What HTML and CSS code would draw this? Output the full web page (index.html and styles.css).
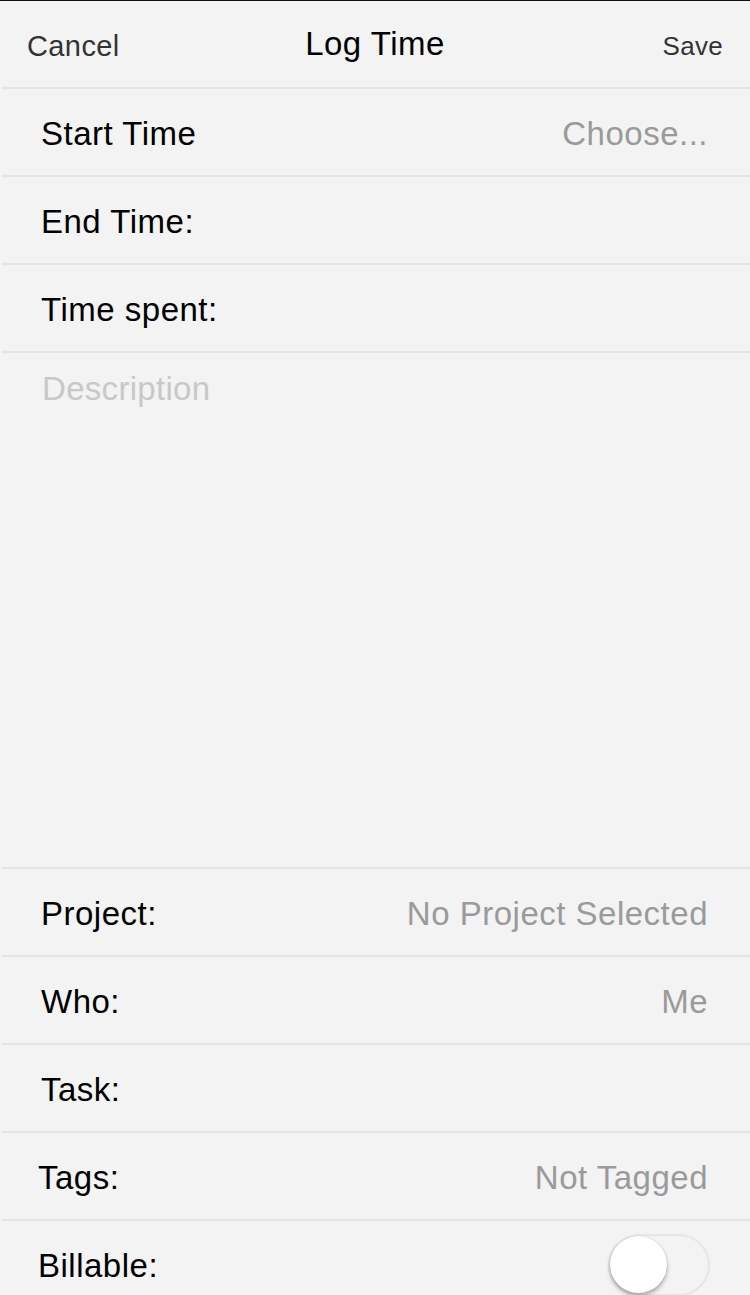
FILE: index.html
```html
<!DOCTYPE html>
<html>
<head>
  <title>Log Time</title>
  <link rel="stylesheet" href="styles.css">
</head>
<body>
  <div class="screen">
    <div class="navbar">
      <span class="nav-btn cancel">Cancel</span>
      <span class="nav-title">Log Time</span>
      <span class="nav-btn save">Save</span>
    </div>

    <div class="row">
      <span class="label">Start Time</span>
      <span class="value">Choose...</span>
    </div>
    <div class="row">
      <span class="label">End Time:</span>
    </div>
    <div class="row">
      <span class="label">Time spent:</span>
    </div>

    <div class="description">Description</div>

    <div class="row">
      <span class="label">Project:</span>
      <span class="value">No Project Selected</span>
    </div>
    <div class="row">
      <span class="label">Who:</span>
      <span class="value">Me</span>
    </div>
    <div class="row">
      <span class="label">Task:</span>
    </div>
    <div class="row">
      <span class="label shift">Tags:</span>
      <span class="value">Not Tagged</span>
    </div>
    <div class="row last">
      <span class="label shift">Billable:</span>
      <div class="toggle"><div class="knob"></div></div>
    </div>
  </div>
</body>
</html>
```

FILE: styles.css
```css
html, body {
  margin: 0;
  padding: 0;
}

body {
  font-family: "Liberation Sans", Arial, sans-serif;
  background-color: #f3f3f3;
  color: #000;
  overflow: hidden;
}

.screen {
  height: 1295px;
  border-top: 1px solid #111;
  overflow: hidden;
}

.navbar {
  height: 86px;
  display: grid;
  grid-template-columns: 1fr auto 1fr;
  align-items: center;
  padding: 0 27px 0 25px;
  border-bottom: 2px solid #e4e4e4;
  margin-left: 2px;
}

.nav-btn {
  color: #333;
  margin-top: 4px;
}

.cancel {
  font-size: 29px;
  letter-spacing: 0.4px;
}

.save {
  font-size: 26px;
  justify-self: end;
  letter-spacing: 0.3px;
}

.nav-title {
  font-size: 33px;
  letter-spacing: 0.5px;
  color: #000;
}

.row {
  height: 86px;
  display: flex;
  align-items: center;
  justify-content: space-between;
  padding: 0 42px 0 39px;
  margin-left: 2px;
  border-bottom: 2px solid #e4e4e4;
}

.row.last {
  border-bottom: none;
}

.label,
.value {
  font-size: 33px;
  letter-spacing: 0.5px;
  padding-top: 4px;
}

.label.shift {
  margin-left: -3px;
}

.value {
  color: #9a9a9a;
}

.description {
  height: 480px;
  padding: 17px 0 17px 40px;
  margin-left: 2px;
  font-size: 33px;
  letter-spacing: 0.3px;
  color: #c8c8c8;
  border-bottom: 2px solid #e4e4e4;
}

.toggle {
  position: relative;
  width: 98px;
  height: 58px;
  border: 2px solid #e6e6e6;
  border-radius: 31px;
  margin-top: 2px;
  margin-right: -2px;
}

.knob {
  position: absolute;
  left: 0;
  top: 0;
  width: 57px;
  height: 57px;
  border-radius: 50%;
  background-color: #fff;
  box-shadow: 0 3px 4px rgba(0, 0, 0, 0.3), 0 0 1px rgba(0, 0, 0, 0.2);
}
```
